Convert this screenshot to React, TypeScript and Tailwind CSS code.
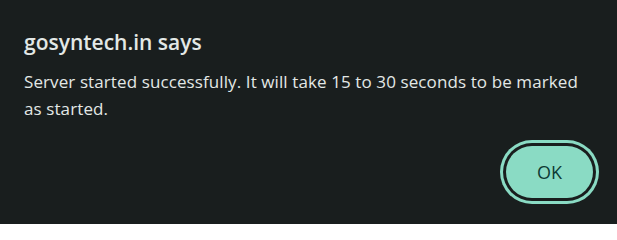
export default function App() {
  return (
    <div className="w-[617px] h-[224px] bg-[#191e1e] text-[#e3e8e6] font-['Open_Sans',sans-serif] flex flex-col px-6 pt-7 pb-[26px]">
      <h1 className="text-[21px] leading-[28px] font-semibold">gosyntech.in says</h1>
      <p className="mt-3 text-[17px] leading-[27px] tracking-[0.1px] w-[562px]">
        Server started successfully. It will take 15 to 30 seconds to be marked as started.
      </p>
      <div className="mt-auto flex justify-end">
        <button className="w-[87px] h-[52px] rounded-full bg-[#8adbc4] text-[#0e3b35] text-[18px] shadow-[0_0_0_3px_#191e1e,0_0_0_6px_#8adbc4]">
          OK
        </button>
      </div>
    </div>
  );
}
